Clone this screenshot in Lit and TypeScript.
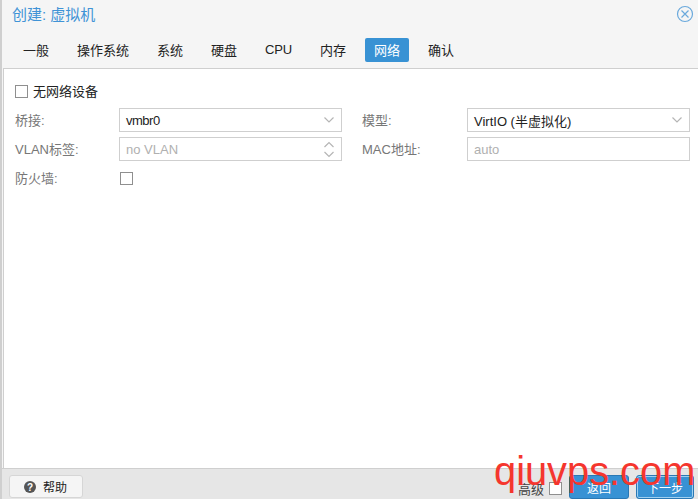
import { LitElement, html, css } from "lit";
import { customElement } from "lit/decorators.js";

const chevron = html`<svg class="chev" width="12" height="8" viewBox="0 0 12 8"><path d="M1.5 1.5 6 6l4.5-4.5" fill="none" stroke="#b5b5b5" stroke-width="1.2"/></svg>`;

@customElement("app-root")
export class AppRoot extends LitElement {
  static styles = css`
    :host { display: block; width: 698px; height: 499px; position: relative; overflow: hidden; background: #f5f5f5;
      font-family: "Liberation Sans", "Noto Sans CJK SC", sans-serif; font-size: 13px; color: #222; }
    .frame { display: flex; flex-direction: column; height: 499px; border-left: 2px solid #cfcfcf; box-sizing: border-box; }
    .head { height: 68px; box-sizing: border-box; background: #f5f5f5; display: flex; flex-direction: column; }
    .title { height: 27px; padding: 0 0 0 10px; display: flex; align-items: center; justify-content: space-between; color: #3f93d6; font-size: 15px; }
    .close { margin-right: 4px; margin-top: 1px; display: block; }
    .tabs { display: flex; padding-left: 12px; margin-top: 11px; gap: 10px; }
    .tab { height: 24px; padding: 0 9px 1px; box-sizing: border-box; display: flex; align-items: center; border-radius: 2px; color: #222; }
    .tab.on { background: #3892d4; color: #fff; }
    .tab.cpu { letter-spacing: -0.2px; }
    .body { flex: 1; background: #fff; border-top: 1px solid #cfcfcf; border-left: 1px solid #cfcfcf; margin-left: 1px; padding: 12px 8px 0 11px; }
    .check-row { display: flex; align-items: center; gap: 5px; height: 20px; }
    .check-text { padding-bottom: 2px; }
    .box { width: 11px; height: 11px; border: 1px solid #8f8f8f; background: #fff; display: block; flex: none; }
    .grid { display: grid; grid-template-columns: 104px 223px 125px 223px; row-gap: 5px; margin-top: 7px; align-items: center; }
    .lab { color: #777; padding-bottom: 2px; }
    .field { height: 24px; box-sizing: border-box; border: 1px solid #cfcfcf; background: #fff; display: flex; align-items: center; justify-content: space-between; padding: 0 6px; color: #222; }
    .field.dis { color: #b0b0b0; }
    .narrow { letter-spacing: -0.5px; }
    .spin { display: flex; flex-direction: column; gap: 3px; }
    .chev { display: block; }
    .right { padding-left: 20px; }
    .box-cell { padding: 6px 0 6px 1px; }
    .foot { height: 31px; box-sizing: border-box; background: #e6e6e6; border-top: 1px solid #cfcfcf; display: flex; align-items: flex-start; padding: 5px 4px 0 7px; gap: 7px; }
    .help { height: 23px; width: 74px; box-sizing: border-box; border: 1px solid #d6d6d6; border-radius: 3px; background: #f5f5f5; display: flex; align-items: center; justify-content: center; gap: 6px; margin-top: 1px; font-size: 12px; padding-right: 2px; }
    .spacer { flex: 1; }
    .adv { display: flex; align-items: center; gap: 5px; color: #444; height: 24px; margin-top: 2px; }
    .btn { height: 24px; box-sizing: border-box; width: 60px; border-radius: 3px; background: #3892d4; color: #fff; font-size: 12px; display: flex; align-items: center; justify-content: center; border: 1px solid #2a78b4; margin-top: 1px; }
    .btn.next { width: 58px; box-shadow: inset 0 0 0 1px #9fd0f0; }
    .mark { position: absolute; left: 494px; top: 448px; font-family: "Liberation Sans", sans-serif; font-size: 39.8px; line-height: 46px; color: #f5362e; white-space: nowrap; }
  `;

  render() {
    const tabs = ["一般", "操作系统", "系统", "硬盘", "CPU", "内存", "网络", "确认"];
    return html`
      <div class="frame">
        <div class="head">
          <div class="title"><span>创建: 虚拟机</span>
            <svg class="close" width="18" height="18" viewBox="0 0 18 18"><circle cx="9" cy="9" r="7.5" fill="none" stroke="#6aa9dc" stroke-width="1.2"/><path d="M5.5 5.5l7 7M12.5 5.5l-7 7" stroke="#6aa9dc" stroke-width="1.2"/></svg>
          </div>
          <div class="tabs">${tabs.map((t) => html`<div class="tab ${t === "网络" ? "on" : t === "CPU" ? "cpu" : ""}">${t}</div>`)}</div>
        </div>
        <div class="body">
          <div class="check-row"><span class="box"></span><span class="check-text">无网络设备</span></div>
          <div class="grid">
            <div class="lab">桥接:</div>
            <div class="field"><span class="narrow">vmbr0</span>${chevron}</div>
            <div class="lab right">模型:</div>
            <div class="field"><span>VirtIO (半虚拟化)</span>${chevron}</div>
            <div class="lab">VLAN标签:</div>
            <div class="field dis"><span>no VLAN</span>
              <span class="spin">
                <svg width="12" height="7" viewBox="0 0 12 7"><path d="M1.5 6 6 1.5 10.5 6" fill="none" stroke="#b5b5b5" stroke-width="1.2"/></svg>
                <svg width="12" height="7" viewBox="0 0 12 7"><path d="M1.5 1 6 5.5 10.5 1" fill="none" stroke="#b5b5b5" stroke-width="1.2"/></svg>
              </span></div>
            <div class="lab right">MAC地址:</div>
            <div class="field dis"><span>auto</span></div>
            <div class="lab">防火墙:</div>
            <div class="box-cell"><span class="box"></span></div>
          </div>
        </div>
        <div class="foot">
          <div class="help">
            <svg width="14" height="14" viewBox="0 0 14 14"><circle cx="7" cy="7" r="6" fill="#555"/><text x="7" y="10.5" text-anchor="middle" font-size="10" font-weight="700" fill="#fff" font-family="Liberation Sans">?</text></svg>
            <span>帮助</span>
          </div>
          <div class="spacer"></div>
          <div class="adv"><span>高级</span><span class="box"></span></div>
          <div class="btn">返回</div>
          <div class="btn next">下一步</div>
        </div>
      </div>
      <div class="mark">qiuvps.com</div>
    `;
  }
}
